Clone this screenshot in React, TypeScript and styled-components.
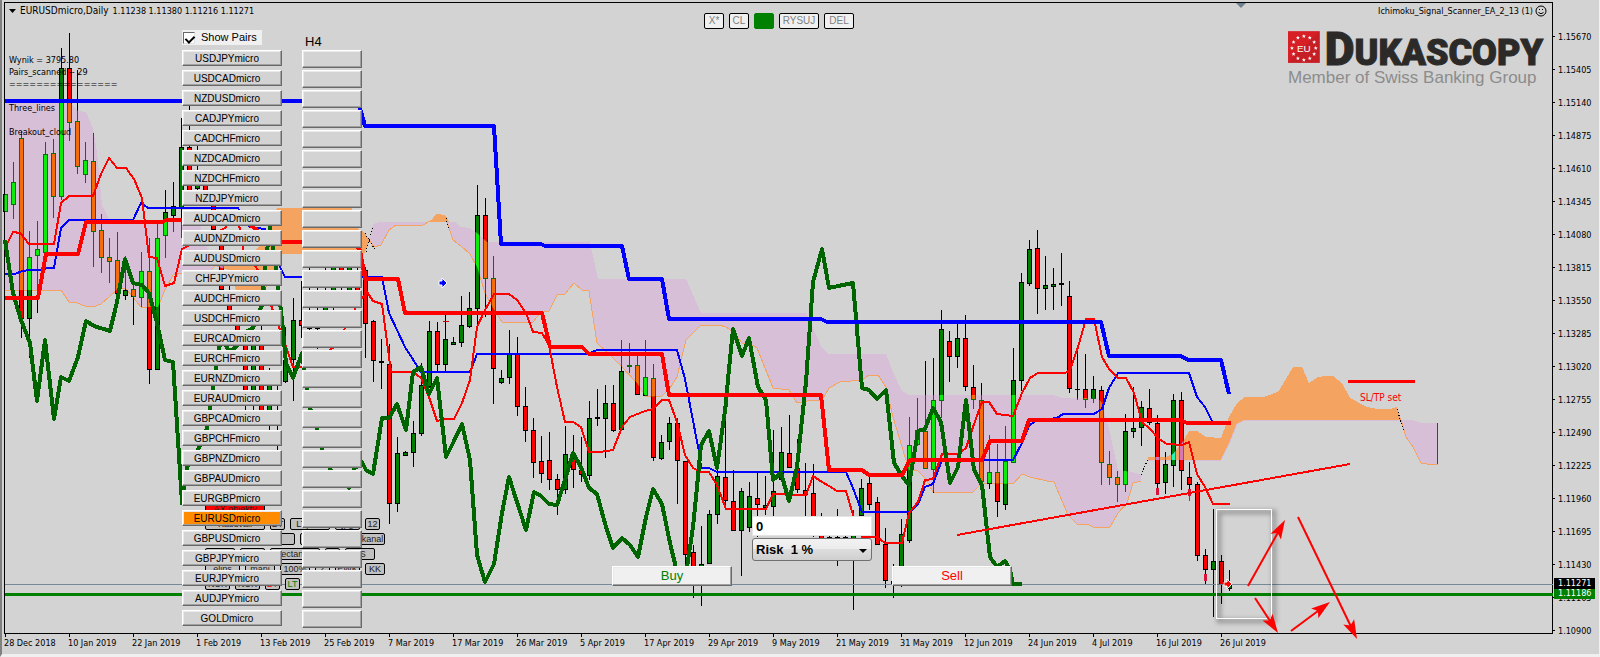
import React from 'react';
import styled, { createGlobalStyle } from 'styled-components';

const UI = '"Liberation Sans", Arial, sans-serif';
const SMALL = '"DejaVu Sans Condensed", "DejaVu Sans", Tahoma, sans-serif';

/* ---------- data ---------- */

const PRICES = [
  '1.15670', '1.15405', '1.15140', '1.14875', '1.14610', '1.14345', '1.14080', '1.13815', '1.13550', '1.13285',
  '1.13020', '1.12755', '1.12490', '1.12225', '1.11960', '1.11695', '1.11430', '1.11165', '1.10900',
];

const DATES = [
  '28 Dec 2018', '10 Jan 2019', '22 Jan 2019', '1 Feb 2019', '13 Feb 2019', '25 Feb 2019', '7 Mar 2019',
  '17 Mar 2019', '26 Mar 2019', '5 Apr 2019', '17 Apr 2019', '29 Apr 2019', '9 May 2019', '21 May 2019',
  '31 May 2019', '12 Jun 2019', '24 Jun 2019', '4 Jul 2019', '16 Jul 2019', '26 Jul 2019',
];

const PAIRS = [
  'USDJPY', 'USDCAD', 'NZDUSD', 'CADJPY', 'CADCHF', 'NZDCAD', 'NZDCHF', 'NZDJPY', 'AUDCAD', 'AUDNZD', 'AUDUSD',
  'CHFJPY', 'AUDCHF', 'USDCHF', 'EURCAD', 'EURCHF', 'EURNZD', 'EURAUD', 'GBPCAD', 'GBPCHF', 'GBPNZD', 'GBPAUD',
  'EURGBP', 'EURUSD', 'GBPUSD', 'GBPJPY', 'EURJPY', 'AUDJPY', 'GOLD',
];
const CURRENT = 'EURUSD';

type Candle = [slot: number, high: number, top: number, bottom: number, low: number, side: 'G' | 'R'];

const CANDLES: Candle[] = [
  [0, 194, 194, 211, 211, 'G'], [1, 162, 182, 204, 219, 'G'], [2, 131, 138, 318, 338, 'R'], [3, 231, 257, 318, 358, 'G'],
  [4, 221, 249, 255, 313, 'G'], [5, 142, 154, 252, 252, 'G'], [6, 139, 153, 196, 218, 'R'], [7, 48, 68, 196, 200, 'G'],
  [8, 33, 68, 122, 141, 'R'], [9, 70, 121, 166, 174, 'R'], [10, 142, 160, 174, 183, 'G'], [11, 133, 161, 231, 267, 'R'],
  [12, 214, 230, 257, 273, 'R'], [13, 238, 257, 261, 283, 'R'], [14, 232, 260, 293, 293, 'R'], [15, 256, 290, 295, 300, 'G'],
  [16, 283, 289, 296, 325, 'R'], [17, 252, 271, 297, 307, 'G'], [18, 238, 271, 369, 384, 'R'], [19, 220, 238, 369, 370, 'G'],
  [20, 190, 212, 235, 258, 'G'], [21, 182, 206, 215, 232, 'G'], [22, 118, 147, 207, 238, 'G'], [23, 106, 147, 190, 193, 'R'],
  [24, 145, 185, 188, 190, 'G'], [25, 170, 178, 190, 195, 'R'], [26, 200, 205, 229, 232, 'R'], [27, 236, 240, 289, 292, 'R'],
  [28, 283, 300, 312, 315, 'R'], [29, 315, 320, 330, 334, 'R'], [30, 330, 343, 393, 410, 'R'], [31, 332, 340, 393, 412, 'G'],
  [32, 325, 340, 412, 416, 'R'], [33, 368, 380, 412, 432, 'G'], [34, 385, 395, 397, 450, 'G'], [35, 327, 360, 381, 383, 'G'],
  [36, 298, 320, 359, 401, 'G'], [37, 281, 320, 325, 338, 'R'], [38, 262, 322, 328, 330, 'R'], [39, 282, 322, 328, 349, 'R'],
  [40, 262, 290, 310, 328, 'G'], [41, 262, 264, 300, 310, 'G'], [42, 262, 264, 275, 290, 'R'], [43, 262, 264, 292, 296, 'G'],
  [44, 262, 270, 290, 296, 'R'], [45, 267, 270, 323, 358, 'R'], [46, 320, 321, 360, 382, 'R'], [47, 339, 361, 362, 389, 'G'],
  [48, 344, 364, 503, 524, 'R'], [49, 437, 453, 503, 512, 'G'], [50, 451, 452, 455, 456, 'G'], [51, 421, 433, 452, 467, 'G'],
  [52, 363, 385, 433, 436, 'G'], [53, 321, 331, 386, 388, 'G'], [54, 322, 331, 364, 372, 'R'], [55, 315, 339, 364, 371, 'G'],
  [56, 337, 342, 344, 344, 'G'], [57, 296, 325, 342, 347, 'G'], [58, 292, 308, 326, 328, 'G'], [59, 185, 215, 308, 327, 'G'],
  [60, 198, 215, 278, 317, 'R'], [61, 256, 278, 368, 404, 'R'], [62, 370, 378, 382, 384, 'G'], [63, 330, 354, 377, 384, 'G'],
  [64, 337, 354, 406, 416, 'R'], [65, 387, 406, 430, 442, 'R'], [66, 418, 430, 462, 478, 'R'], [67, 436, 461, 473, 483, 'R'],
  [68, 432, 460, 479, 490, 'R'], [69, 474, 479, 489, 515, 'R'], [70, 426, 454, 489, 494, 'G'], [71, 435, 458, 469, 488, 'R'],
  [72, 437, 470, 474, 482, 'R'], [73, 401, 418, 475, 480, 'G'], [74, 389, 417, 418, 426, 'G'], [75, 385, 403, 418, 458, 'G'],
  [76, 385, 403, 430, 432, 'R'], [77, 340, 371, 429, 430, 'G'], [78, 343, 365, 366, 373, 'G'], [79, 356, 365, 394, 395, 'R'],
  [80, 340, 377, 395, 396, 'G'], [81, 364, 378, 457, 461, 'R'], [82, 435, 442, 458, 460, 'G'], [83, 417, 423, 441, 450, 'G'],
  [84, 418, 423, 460, 504, 'R'], [85, 461, 461, 554, 570, 'R'], [86, 545, 552, 570, 598, 'R'], [87, 526, 564, 575, 606, 'G'],
  [88, 510, 514, 563, 564, 'G'], [89, 470, 476, 514, 524, 'G'], [90, 413, 477, 500, 510, 'R'], [91, 470, 501, 530, 531, 'R'],
  [92, 488, 491, 530, 576, 'G'], [93, 482, 496, 527, 532, 'G'], [94, 472, 498, 504, 537, 'R'], [95, 476, 505, 507, 515, 'G'],
  [96, 430, 491, 506, 516, 'G'], [97, 427, 452, 479, 482, 'G'], [98, 415, 453, 467, 467, 'R'], [99, 439, 468, 489, 493, 'R'],
  [100, 463, 490, 494, 520, 'R'], [101, 464, 493, 525, 537, 'R'], [102, 513, 517, 540, 540, 'R'], [103, 535, 537, 538, 540, 'G'],
  [104, 509, 537, 538, 566, 'G'], [105, 536, 537, 538, 540, 'G'], [106, 510, 520, 545, 610, 'G'], [107, 479, 488, 515, 520, 'G'],
  [108, 475, 483, 504, 510, 'R'], [109, 497, 502, 544, 545, 'R'], [110, 528, 544, 580, 588, 'R'], [111, 564, 581, 583, 598, 'G'],
  [112, 519, 534, 570, 587, 'G'], [113, 417, 445, 540, 543, 'G'], [114, 398, 430, 444, 445, 'G'], [115, 361, 431, 468, 469, 'R'],
  [116, 358, 400, 469, 493, 'G'], [117, 310, 329, 400, 418, 'G'], [118, 331, 341, 356, 382, 'R'], [119, 324, 338, 356, 368, 'G'],
  [120, 315, 338, 386, 391, 'R'], [121, 365, 387, 399, 409, 'R'], [122, 383, 400, 481, 482, 'R'], [123, 435, 472, 483, 489, 'G'],
  [124, 444, 472, 501, 517, 'R'], [125, 426, 461, 504, 510, 'G'], [126, 348, 380, 462, 462, 'G'], [127, 273, 282, 380, 391, 'G'],
  [128, 240, 249, 283, 286, 'G'], [129, 230, 248, 288, 314, 'R'], [130, 256, 285, 288, 310, 'G'], [131, 268, 284, 286, 310, 'G'],
  [132, 253, 283, 284, 306, 'G'], [133, 281, 296, 388, 393, 'R'], [134, 349, 389, 389, 400, 'R'], [135, 354, 389, 399, 408, 'R'],
  [136, 376, 389, 398, 403, 'G'], [137, 386, 390, 462, 485, 'R'], [138, 451, 464, 477, 485, 'R'], [139, 471, 477, 484, 502, 'R'],
  [140, 414, 431, 484, 492, 'G'], [141, 387, 428, 431, 438, 'G'], [142, 401, 407, 427, 446, 'G'], [143, 389, 408, 422, 425, 'R'],
  [144, 415, 423, 483, 493, 'R'], [145, 452, 464, 482, 494, 'G'], [146, 394, 400, 465, 487, 'G'], [147, 392, 400, 470, 490, 'R'],
  [148, 462, 477, 484, 496, 'R'], [149, 482, 484, 555, 561, 'R'], [150, 549, 555, 569, 585, 'R'], [151, 509, 561, 569, 617, 'G'],
  [152, 555, 561, 584, 604, 'R'], [153, 570, 584, 588, 591, 'G'],
];

const SPAN_A_1 = '5,290 61,290 69,302 77,303 85,306 93,307 101,304 110,296 120,287 127,290 141,307 158,307 165,290 173,275 182,273 208,273 215,266';
const SPAN_A_2 = '369,240 374,247 381,245 389,230 396,225 423,225 432,220 437,214 445,216 450,231 453,240 461,246 470,254 477,267 485,293 493,308 502,322 533,322 541,312 549,311 557,295 565,294 574,283 582,290 589,291 597,343 613,358 621,366 637,383 646,397 662,396 670,388 677,377 681,360 686,340 701,325 719,325 726,327 733,332 742,343 749,343 757,348 765,368 773,388 789,390 797,403 812,400 822,400 829,388 840,382 862,380 869,375 878,375 886,387 893,417 902,447 909,470 918,471 925,478 933,492 973,492 982,483 1013,484 1022,474 1030,477 1047,481 1054,482 1068,515 1077,524 1087,524 1093,527 1110,527 1118,513 1127,503 1133,483 1141,481';
const PURPLE = [
  `5,103 71,103 78,111 86,112 93,128 97,152 102,205 109,219 182,221 199,222 206,245 215,266 208,273 182,273 173,275 165,290 158,307 141,307 127,290 120,287 110,296 101,304 93,307 85,306 77,303 69,302 61,290 5,290`,
  `1141,475 1132,472 1118,470 1110,433 1102,403 1098,398 1062,398 1053,395 909,395 902,391 893,372 886,354 829,354 822,348 806,313 701,313 686,279 598,279 590,242 487,242 477,233 470,228 461,227 455,222 380,222 373,224 ${SPAN_A_2}`,
  '1401,420 1413,420 1421,423 1438,423 1438,464 1427,464 1421,463 1413,447 1406,437',
];
const ORANGE = [
  '215,266 255,250 263,242 277,208 352,208 357,228 365,233 369,240 365,253 281,254 272,280 264,290 236,290 229,270',
  '430,222 437,214 446,216 449,222',
  '1148,457 1166,457 1173,454 1182,443 1189,431 1197,431 1206,437 1221,438 1229,417 1237,403 1245,397 1263,397 1278,392 1286,379 1293,367 1302,367 1309,383 1318,377 1325,376 1333,376 1342,383 1350,398 1367,407 1377,409 1390,409 1397,407 1401,420 1245,420 1237,424 1230,442 1221,460 1148,460',
];

const KUMO_BLUE = '5,101 354,101 360,108 365,126 494,126 501,244 541,244 545,246 622,246 629,279 662,279 669,319 821,319 827,322 1101,322 1109,356 1181,356 1188,360 1221,360 1229,394';
const KUMO_RED = '5,298 38,298 46,254 78,254 86,222 162,222 166,220 245,220 270,242 352,242 360,250 365,279 398,279 405,313 542,313 550,347 582,347 589,354 662,354 669,395 821,395 829,470 862,470 869,475 902,475 910,460 982,460 990,441 1022,441 1029,420 1181,420 1187,423 1231,423';
const KIJUN = '5,274 15,274 22,271 31,270 44,270 46,268 54,268 61,228 69,220 133,220 141,203 148,208 238,208 250,227 265,229 280,267 285,277 382,277 389,313 405,347 421,372 470,372 477,354 587,354 597,350 677,350 685,379 700,457 701,468 709,468 717,472 846,472 853,488 862,512 910,512 918,504 925,487 933,484 942,460 1013,460 1022,443 1029,426 1035,421 1057,418 1063,414 1094,414 1102,409 1109,388 1118,373 1189,373 1197,397 1205,407 1212,421';
const TENKAN = '5,248 13,232 20,233 29,244 54,244 61,203 69,196 93,196 101,174 109,158 117,168 126,168 134,179 142,198 149,257 157,258 165,286 174,283 182,249 188,246 225,228 232,218 240,228 243,250 258,270 272,308 283,338 293,367 302,367 333,348 345,328 355,309 362,298 367,292 373,301 382,304 391,372 413,372 421,378 429,397 437,421 446,419 454,419 462,403 470,380 477,327 485,310 494,294 509,294 517,300 526,313 533,332 542,333 549,345 557,387 565,422 573,422 581,427 589,452 600,452 613,450 622,427 630,417 645,411 653,409 662,400 669,400 677,422 685,455 693,468 701,472 709,472 717,485 726,509 766,509 773,494 806,495 813,476 822,482 829,486 837,491 846,491 853,515 862,537 877,537 885,543 902,543 909,513 918,502 925,480 933,479 942,454 958,454 966,448 973,427 982,402 989,402 997,414 1013,416 1022,393 1030,378 1038,373 1065,373 1070,370 1078,347 1086,319 1094,319 1102,357 1109,369 1118,378 1126,378 1134,393 1142,422 1150,429 1159,439 1167,444 1182,445 1189,442 1197,474 1205,487 1213,504 1230,504';
const CHIKOU = '5,240 13,293 21,320 30,343 37,401 45,340 54,419 61,377 69,381 78,357 86,321 94,326 110,331 117,302 125,259 133,283 142,285 149,293 157,323 165,360 173,362 182,503 187,467 199,448 207,428 213,388 219,348 223,338 229,352 236,347 245,332 253,328 262,305 265,267 270,227 276,268 282,320 286,363 293,378 302,353 307,388 310,408 317,428 322,449 330,469 340,480 349,488 354,469 362,462 366,470 373,474 382,418 389,418 397,404 406,430 413,372 421,367 429,394 437,378 446,457 454,441 462,424 470,460 477,555 485,582 494,564 502,513 509,477 517,502 526,530 534,492 541,496 549,504 557,505 565,480 573,453 581,467 589,488 597,494 606,527 613,548 622,538 630,545 638,557 646,517 653,489 662,504 670,543 677,572 686,574 693,527 697,487 701,445 709,431 717,468 726,403 728,379 733,329 742,356 749,338 758,387 766,400 773,480 781,473 789,501 797,467 806,382 813,282 822,249 829,288 838,286 853,283 862,388 869,390 877,399 886,390 894,463 902,476 909,485 918,431 925,429 933,408 941,422 950,483 958,467 966,400 974,470 982,485 990,557 997,567 1005,561 1010,570 1013,584 1022,584';

/* ---------- layout ---------- */

const Global = createGlobalStyle`
  * { box-sizing: border-box; }
  body { margin: 0; background: #d3d3d3; }
  button, input, select { font: inherit; color: inherit; margin: 0; }
`;

const Window = styled.main`
  display: grid;
  grid-template-columns: minmax(0, 1fr) 46px;
  grid-template-rows: minmax(620px, 1fr) 20px;
  min-height: 100vh;
  padding: 2px 0 0 2px;
  background: #d3d3d3;
  border-left: 2px solid #808080;
  border-right: 1px solid #f0f0f0;
  border-bottom: 3px solid #f0f0f0;
  font: 9px/12px ${SMALL};
  color: #000;
`;

const Plot = styled.section`
  position: relative;
  border: 1px solid #000;
`;

const ChartSvg = styled.svg`
  position: absolute;
  inset: 0;
  width: 100%;
  height: 100%;
  overflow: visible;
  z-index: 1;
`;

const Header = styled.header`
  position: relative;
  z-index: 2;
  display: flex;
  justify-content: space-between;
  padding: 2px 5px 0 4px;
`;

const Symbol = styled.h1`
  display: flex;
  align-items: center;
  gap: 4px;
  margin: 0;
  font: 10px/12px ${SMALL};
`;

const Quotes = styled.span`
  font-size: 9px;
`;

const Expert = styled.div`
  display: flex;
  align-items: center;
  gap: 2px;
`;

const Comment = styled.pre`
  position: absolute;
  z-index: 2;
  left: 4px;
  top: 51px;
  margin: 0;
  font: 9px/12px ${SMALL};
`;

const Toolbar = styled.div`
  position: absolute;
  z-index: 2;
  left: 699px;
  top: 10px;
  display: flex;
  gap: 5px;
`;

const ToolButton = styled.button<{ $w: number; $on?: boolean }>`
  width: ${p => p.$w}px;
  height: 16px;
  padding: 0;
  border: 1px solid ${p => (p.$on ? '#008000' : '#000')};
  border-radius: 2px;
  background: ${p => (p.$on ? '#008000' : '#f0f0f0')};
  color: #808080;
  font: 10px/14px ${UI};
`;

const ObjectPanel = styled.div`
  position: absolute;
  z-index: 2;
  left: 200px;
  top: 500px;
  display: flex;
  flex-direction: column;
  gap: 3px;
`;

const ObjectRow = styled.div`
  display: flex;
  gap: 5px;
`;

const ObjectButton = styled.button<{ $w: number; $bg?: string; $ink?: string }>`
  width: ${p => p.$w}px;
  height: 12px;
  padding: 0;
  overflow: hidden;
  border: 1px solid #000;
  border-radius: 2px;
  background: ${p => p.$bg ?? '#c0c0c0'};
  color: ${p => p.$ink ?? '#222'};
  font: 9px/10px ${UI};
  white-space: nowrap;
`;

const Scanner = styled.div`
  position: absolute;
  z-index: 3;
  left: 177px;
  top: 27px;
  display: grid;
  grid-template-columns: 100px 60px;
  grid-template-rows: 20px;
  column-gap: 20px;
`;

const ShowPairs = styled.label`
  display: flex;
  align-items: center;
  gap: 6px;
  width: 80px;
  height: 15px;
  padding-left: 1px;
  background: #f0f0f0;
  font: 11px/15px ${UI};
`;

const Tick = styled.input`
  appearance: none;
  flex: none;
  width: 12px;
  height: 12px;
  border: 1px solid;
  border-color: #696969 #e3e3e3 #e3e3e3 #696969;
  background: #fff;
  position: relative;
  &:checked::after {
    content: '';
    position: absolute;
    left: 3px;
    top: 1px;
    width: 4px;
    height: 7px;
    border: solid #000;
    border-width: 0 2px 2px 0;
    transform: rotate(45deg);
  }
`;

const Frame = styled.h2`
  margin: 0;
  padding: 4px 0 0 3px;
  font: 13px/16px ${UI};
`;

const Column = styled.div`
  display: grid;
  grid-auto-rows: 20px;
  align-items: start;
`;

const Raised = styled.button`
  padding: 0;
  border: 1px solid;
  border-color: #fff #696969 #696969 #fff;
  box-shadow: inset -1px -1px #a0a0a0, inset 1px 1px #e9e9e9;
  background: #d3d3d3;
`;

const PairButton = styled(Raised)<{ $active: boolean }>`
  height: 16px;
  padding: 1px 10px 0 0;
  background: ${p => (p.$active ? '#ff8c00' : '#d3d3d3')};
  font: 10px/13px ${UI};
`;

const SignalButton = styled(Raised)`
  height: 18px;
`;

const TradePanel = styled.form`
  position: absolute;
  z-index: 3;
  left: 607px;
  top: 513px;
  display: grid;
  grid-template-columns: repeat(3, 120px);
  column-gap: 20px;
  align-items: end;
`;

const OrderFields = styled.div`
  display: grid;
  gap: 2px;
  padding-bottom: 25px;
  font: bold 13px/18px ${UI};
`;

const Lots = styled.input`
  width: 100%;
  height: 20px;
  padding: 0 3px;
  border: 1px solid #e3e3e3;
  background: #fff;
`;

const Risk = styled.select`
  appearance: none;
  display: block;
  width: 100%;
  height: 23px;
  padding: 0 3px;
  border: 1px solid #707070;
  border-radius: 3px;
  background: linear-gradient(#f2f2f2, #ebebeb 50%, #dddddd 50%, #cfcfcf);
`;

const RiskBox = styled.div`
  position: relative;
  &::after {
    content: '';
    position: absolute;
    right: 5px;
    top: 11px;
    border: 4px solid transparent;
    border-top-color: #000;
    border-bottom: 0;
    pointer-events: none;
  }
`;

const OrderButton = styled(Raised)<{ $ink: string }>`
  height: 20px;
  background: #f0f0f0;
  color: ${p => p.$ink};
  font: 13px/18px ${UI};
`;

const Brand = styled.div`
  position: absolute;
  z-index: 2;
  right: 9px;
  top: 25px;
  width: 255px;
`;

const BrandRow = styled.div`
  display: flex;
  align-items: flex-end;
  gap: 5px;
  height: 35px;
`;

const BrandName = styled.strong`
  height: 35px;
  font: 900 36px/42px Roboto, ${UI};
  -webkit-text-stroke: 1px #2b2a29;
  color: #2b2a29;
  white-space: nowrap;
  span { font-size: 46px; }
`;

const BrandNote = styled.div`
  padding-top: 5px;
  font: 17px/20px ${UI};
  color: #8c8c8c;
  white-space: nowrap;
`;

const PriceAxis = styled.aside`
  position: relative;
  grid-row: 1 / span 2;
  grid-column: 2;
  padding-top: 18px;
`;

const Price = styled.div`
  display: flex;
  align-items: center;
  gap: 3px;
  height: 33px;
  &::before {
    content: '';
    width: 2px;
    height: 1px;
    background: #000;
  }
`;

const Badge = styled.div<{ $top: number; $bg: string }>`
  position: absolute;
  left: 1px;
  top: ${p => p.$top}px;
  width: 41px;
  height: 11px;
  padding-left: 4px;
  background: ${p => p.$bg};
  color: #fff;
  line-height: 11px;
`;

const TimeAxis = styled.footer`
  display: flex;
  grid-column: 1;
  overflow: hidden;
`;

const Time = styled.div`
  flex: 0 0 64px;
  white-space: nowrap;
  &::before {
    content: '';
    display: block;
    width: 1px;
    height: 3px;
    margin-left: 1px;
    background: #000;
  }
`;

/* ---------- chart ---------- */

function Candles({ wick, up, down }: { wick: string; up: string; down: string }) {
  return (
    <g shapeRendering="crispEdges">
      {CANDLES.map(([slot, high, top, bottom, low, side]) => {
        const x = 5 + slot * 8;
        return (
          <g key={slot}>
            <rect x={x} y={high} width={1} height={Math.max(1, low - high)} fill={wick} />
            <rect x={x - 2} y={top} width={5} height={bottom - top + 1} fill={wick} />
            {bottom - top > 1 && (
              <rect x={x - 1} y={top + 1} width={3} height={bottom - top - 1} fill={side === 'G' ? up : down} />
            )}
          </g>
        );
      })}
    </g>
  );
}

function Line({ points, color, width }: { points: string; color: string; width: number }) {
  return <polyline points={points} fill="none" stroke={color} strokeWidth={width} strokeLinejoin="round" shapeRendering="crispEdges" />;
}

const ARROWS = [[1248, 586, 1285, 520], [1298, 517, 1357, 639], [1255, 598, 1278, 633], [1291, 631, 1330, 602]];

function Arrow({ from: [x1, y1, x2, y2] }: { from: number[] }) {
  const angle = (Math.atan2(y2 - y1, x2 - x1) * 180) / Math.PI;
  const length = Math.hypot(x2 - x1, y2 - y1);
  return (
    <g transform={`translate(${x1} ${y1}) rotate(${angle})`} fill="#f00">
      <rect x={0} y={-1} width={length - 10} height={2} />
      <path d={`M${length} 0L${length - 19} -6L${length - 15} 0L${length - 19} 6Z`} />
    </g>
  );
}

function Chart() {
  return (
    <ChartSvg role="img" aria-label="EURUSD daily chart">
      <defs>
        <clipPath id="inPurple">{PURPLE.map(p => <polygon key={p} points={p} />)}</clipPath>
        <clipPath id="inOrange">{ORANGE.map(p => <polygon key={p} points={p} />)}</clipPath>
        <filter id="soft" x="-20%" y="-20%" width="140%" height="140%"><feGaussianBlur stdDeviation="2" /></filter>
      </defs>
      <g transform="translate(-5 -3)">
        <path d="M1236 3h10l-5 5z" fill="#708090" />
        <g shapeRendering="crispEdges">
          {PURPLE.map(p => <polygon key={p} points={p} fill="#d8bfd8" />)}
          {ORANGE.map(p => <polygon key={p} points={p} fill="#f4a460" />)}
          <rect x={1437} y={423} width={1} height={41} fill="#0b6c0b" />
        </g>
        <Line points={SPAN_A_1} color="#f4a460" width={1} />
        <Line points={SPAN_A_2} color="#f4a460" width={1} />
        <Line points="1401,420 1406,437 1413,447 1421,463 1427,464 1438,464" color="#f4a460" width={1} />
        <Line points="1148,460 1221,460 1230,442 1237,424 1245,420 1401,420" color="#d8bfd8" width={1} />
        <g fill="none" stroke="#000" strokeDasharray="1 2" shapeRendering="crispEdges">
          <path d="M365 233L375 250M366 252L373 226M446 218L449 230M1141 475L1148 459M1397 409L1404 432" />
        </g>

        <Candles wick="#000" up="#008000" down="#f00" />
        <g clipPath="url(#inPurple)"><Candles wick="#0b6c0b" up="#0bec0b" down="#f46c0b" /></g>
        <g clipPath="url(#inOrange)"><Candles wick="#2777b3" up="#27f7b3" down="#d877b3" /></g>

        <g fill="#dc143c" shapeRendering="crispEdges">
          <path d="M1156 488h3v7h-3zM1188 489h3v7h-3zM1204 574h3v7h-3zM1189 496h1v5h-1z" />
        </g>
        <rect x={443} y={321} width={6} height={1} fill="#c00" />

        <rect x={5} y={584} width={1548} height={1} fill="#778899" />
        <rect x={5} y={593} width={1548} height={3} fill="#008000" />

        <Line points={KIJUN} color="#00f" width={2} />
        <Line points={TENKAN} color="#f00" width={2} />
        <Line points={CHIKOU} color="#006400" width={4} />
        <Line points={KUMO_BLUE} color="#00f" width={4} />
        <Line points={KUMO_RED} color="#f00" width={4} />
        <Line points="957,535 1350,464" color="#f00" width={2} />
        <Line points="1348,381 1415,381" color="#f00" width={3} />

        <path d="M439 281h3v-3l5 5-5 5v-3h-3z" fill="#00f" stroke="#fff" />
        <path d="M1224 582h3v-3l5 5-5 5v-3h-3z" fill="#f00" stroke="#fff" />

        <rect x={1219} y={512} width={55} height={109} fill="none" stroke="#000" strokeOpacity={0.25} strokeWidth={5} filter="url(#soft)" />
        <rect x={1216} y={509} width={55} height={109} fill="none" stroke="#fff" strokeWidth={1} transform="translate(.5 .5)" />
        {ARROWS.map(a => <Arrow key={a[0]} from={a} />)}

        <text x={1360} y={401} fontSize={10} fill="#f00">SL/TP set</text>
      </g>
    </ChartSvg>
  );
}

function EuBadge() {
  const stars = Array.from({ length: 12 }, (_, i) => {
    const a = (i * Math.PI) / 6;
    return { x: 16 + 12 * Math.sin(a), y: 17 - 12 * Math.cos(a) };
  });
  return (
    <svg width="32" height="32" viewBox="0 0 32 32" aria-label="EU">
      <rect width="32" height="32" fill="#d71f26" />
      <path d="M32 0V32H0Z" fill="#b91f25" opacity=".6" />
      {stars.map((s, i) => (
        <path key={i} fill="#fff" transform={`translate(${s.x} ${s.y})`} d="M0-2L.6-.6 2-.5.9.4 1.2 1.8 0 1-1.2 1.8-.9.4-2-.5-.6-.6Z" />
      ))}
      <text x="16" y="21" fontSize="10" fontFamily="Liberation Sans" fill="#fff" textAnchor="middle">EU</text>
    </svg>
  );
}

function Smiley() {
  return (
    <svg width="12" height="12" viewBox="0 0 12 12" fill="none" stroke="#000" aria-hidden="true">
      <circle cx="6" cy="6" r="5" />
      <path d="M3.5 7.5Q6 10 8.5 7.5M4.5 4v1M7.5 4v1" />
    </svg>
  );
}

type Obj = { label: string; w: number; bg?: string; ink?: string };
const OBJECTS: Obj[][] = [
  [{ label: 'AX objekty', w: 60, bg: '#ff0000' }],
  [{ label: 'Kasuvali', w: 60 }, { label: 'BT', w: 15 }, { label: 'LTproc', w: 40 }, { label: 'jpg', w: 25 }, { label: '12', w: 15 }],
  [{ label: 'wstega', w: 40 }, { label: 'proc', w: 45 }, { label: 'linia', w: 55 }, { label: 'kanal', w: 25 }],
  [{ label: 'text', w: 30 }, { label: 'arc', w: 25 }, { label: 'Rectangle', w: 50 }, { label: 'tr', w: 15 }, { label: 'FS', w: 30 }],
  [{ label: 'elips', w: 35 }, { label: 'mani', w: 30 }, { label: '100%', w: 30 }, { label: 'Z', w: 15 }, { label: 'EWK', w: 25 }, { label: 'KK', w: 20 }],
  [{ label: 'NUK', w: 25 }, { label: 'NUK', w: 25 }, { label: 'BT', w: 15, ink: '#f00' }, { label: 'LT', w: 15, ink: '#008000' }],
];

export default function App() {
  return (
    <>
      <Global />
      <Window>
        <Plot>
          <Chart />
          <Header>
            <Symbol>
              <svg width="7" height="4" viewBox="0 0 7 4" aria-hidden="true"><path d="M0 0h7L3.500 4z" /></svg>
              EURUSDmicro,Daily
              <Quotes>1.11238 1.11380 1.11216 1.11271</Quotes>
            </Symbol>
            <Expert>Ichimoku_Signal_Scanner_EA_2_13 (1)<Smiley /></Expert>
          </Header>

          <Comment>{'Wynik = 3795.80\nPairs_scanned -- 29\n================\n\nThree_lines\n\nBreakout_cloud'}</Comment>

          <Toolbar>
            <ToolButton $w={20}>X*</ToolButton>
            <ToolButton $w={20}>CL</ToolButton>
            <ToolButton $w={20} $on aria-label="Active" />
            <ToolButton $w={40}>RYSUJ</ToolButton>
            <ToolButton $w={30}>DEL</ToolButton>
          </Toolbar>

          <Brand>
            <BrandRow>
              <EuBadge />
              <BrandName><span>D</span>UKASCOPY</BrandName>
            </BrandRow>
            <BrandNote>Member of Swiss Banking Group</BrandNote>
          </Brand>

          <ObjectPanel>
            {OBJECTS.map((row, i) => (
              <ObjectRow key={i}>
                {row.map((o, j) => <ObjectButton key={j} $w={o.w} $bg={o.bg} $ink={o.ink}>{o.label}</ObjectButton>)}
              </ObjectRow>
            ))}
          </ObjectPanel>

          <Scanner>
            <ShowPairs><Tick type="checkbox" defaultChecked />Show Pairs</ShowPairs>
            <Frame>H4</Frame>
            <Column>
              {PAIRS.map(p => <PairButton key={p} $active={p === CURRENT}>{p}micro</PairButton>)}
            </Column>
            <Column>
              {PAIRS.map(p => <SignalButton key={p} aria-label={`${p} H4 signal`} />)}
            </Column>
          </Scanner>

          <TradePanel onSubmit={e => e.preventDefault()}>
            <OrderButton type="submit" $ink="#008000">Buy</OrderButton>
            <OrderFields>
              <Lots aria-label="Lots" defaultValue="0" />
              <RiskBox>
                <Risk aria-label="Risk"><option>{'Risk\u00a0 1 %'}</option></Risk>
              </RiskBox>
            </OrderFields>
            <OrderButton type="submit" $ink="#f00">Sell</OrderButton>
          </TradePanel>
        </Plot>

        <PriceAxis>
          {PRICES.map(p => <Price key={p}>{p}</Price>)}
          <Badge $top={586} $bg="#008000">1.11186</Badge>
          <Badge $top={576} $bg="#000">1.11271</Badge>
        </PriceAxis>
        <TimeAxis>{DATES.map(d => <Time key={d}>{d}</Time>)}</TimeAxis>
      </Window>
    </>
  );
}
